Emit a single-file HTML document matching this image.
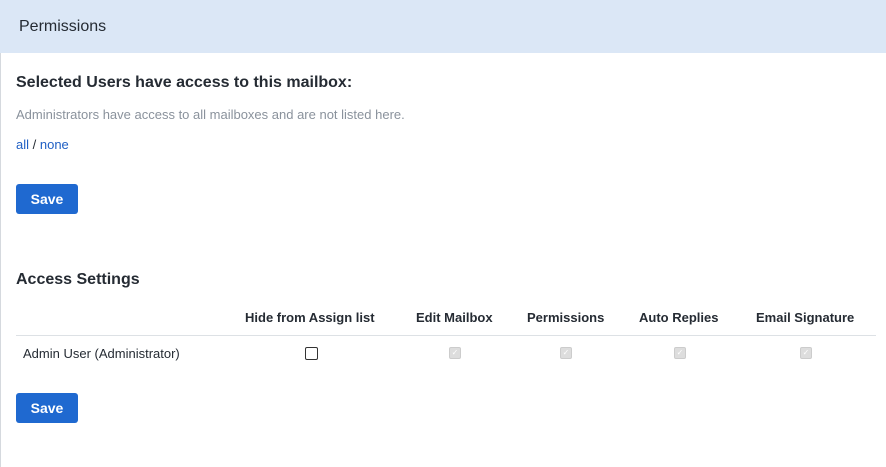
<!DOCTYPE html><html><head><style>
body{margin:0;width:886px;height:467px;background:#fff;font-family:"Liberation Sans",sans-serif;position:relative;overflow:hidden;color:#252b33}
.a{position:absolute;white-space:nowrap}
.hd{position:absolute;left:0;top:0;width:886px;height:53px;background:#dbe7f6}
.btn{position:absolute;left:16px;width:62px;height:30px;background:#1f69d0;border-radius:3px;color:#fff;font-size:14px;font-weight:bold;text-align:center;line-height:30px}
.th{font-size:13px;font-weight:bold;top:310px}
.cb{position:absolute;top:347px;width:10px;height:10px;border:1px solid #ccc;background:#ddd;border-radius:2px;font-size:8px;color:#fff;text-align:center;line-height:10px}
</style></head><body>
<div style="position:absolute;left:0;top:0;width:1px;height:467px;background:#d5d9de"></div>
<div class="hd"></div>
<div class="a" style="left:19px;top:18px;font-size:16px;color:#252b33">Permissions</div>
<div class="a" style="left:16px;top:74px;font-size:16px;font-weight:bold">Selected Users have access to this mailbox:</div>
<div class="a" style="left:16px;top:107px;font-size:13px;color:#8a929c">Administrators have access to all mailboxes and are not listed here.</div>
<div class="a" style="left:16px;top:137px;font-size:13px;color:#1f5fc4">all <span style="color:#252b33">/</span> none</div>
<div class="btn" style="top:184px">Save</div>
<div class="a" style="left:16px;top:271px;font-size:16px;font-weight:bold">Access Settings</div>
<div class="a th" style="left:245px">Hide from Assign list</div>
<div class="a th" style="left:416px">Edit Mailbox</div>
<div class="a th" style="left:527px">Permissions</div>
<div class="a th" style="left:639px">Auto Replies</div>
<div class="a th" style="left:756px">Email Signature</div>
<div style="position:absolute;left:16px;top:335px;width:860px;height:1px;background:#dde1e5"></div>
<div class="a" style="left:23px;top:346px;font-size:13px">Admin User (Administrator)</div>
<div style="position:absolute;left:305px;top:347px;width:11px;height:11px;border:1px solid #333;border-radius:2px"></div>
<div class="cb" style="left:449px">✓</div>
<div class="cb" style="left:560px">✓</div>
<div class="cb" style="left:674px">✓</div>
<div class="cb" style="left:800px">✓</div>
<div class="btn" style="top:393px">Save</div>
</body></html>
